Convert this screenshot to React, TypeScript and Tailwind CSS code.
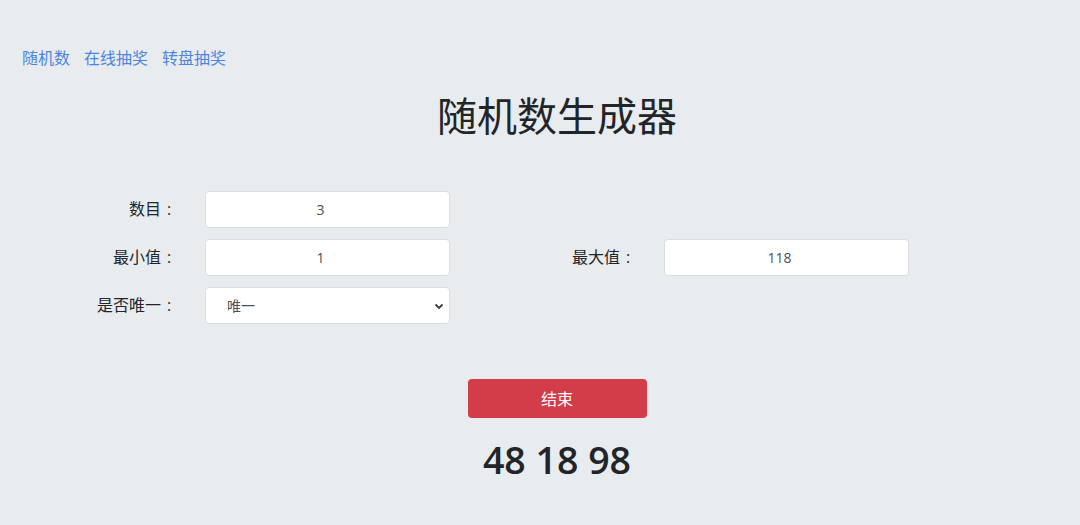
import React from "react";

const font = '"Open Sans", "Noto Sans CJK SC", sans-serif';

function Label({ text }: { text: string }) {
  return (
    <div className="w-[146px] shrink-0 text-right text-[16px] leading-[37px] text-[#212529]">
      {text}
      <span className="inline-block w-[16px] text-center">:</span>
    </div>
  );
}

function Field({ value }: { value: string }) {
  return (
    <input
      readOnly
      value={value}
      className="ml-[28px] h-[37px] w-[245px] rounded-[4px] border border-[#dadde1] bg-white pr-[14px] text-center text-[14px] text-[#495057] outline-none"
      style={{ fontFamily: font }}
    />
  );
}

export default function App() {
  return (
    <div
      className="min-h-[525px] w-full bg-[#e9ecef] text-[#212529]"
      style={{ fontFamily: font }}
    >
      <div className="pt-[46px] pl-[22px] flex gap-[14px] text-[16px] leading-[24px] text-[#4a86e0]">
        <a>随机数</a>
        <a>在线抽奖</a>
        <a>转盘抽奖</a>
      </div>
      <h1 className="mt-[22px] pl-[34px] text-center text-[40px] leading-[48px] font-normal text-[#212529]">
        随机数生成器
      </h1>
      <div className="mt-[51px] pl-[31px] flex flex-col gap-[11px]">
        <div className="flex">
          <div className="flex w-[459px]">
            <Label text="数目" />
            <Field value="3" />
          </div>
        </div>
        <div className="flex">
          <div className="flex w-[459px]">
            <Label text="最小值" />
            <Field value="1" />
          </div>
          <div className="flex w-[459px]">
            <Label text="最大值" />
            <Field value="118" />
          </div>
        </div>
        <div className="flex">
          <div className="flex w-[459px]">
            <Label text="是否唯一" />
            <div className="relative ml-[28px] h-[37px] w-[245px] rounded-[4px] border border-[#dadde1] bg-white">
              <div className="pl-[21px] text-[14px] leading-[35px] text-[#495057]">唯一</div>
              <svg
                className="absolute right-[5px] top-[14px]"
                width="10"
                height="8"
                viewBox="0 0 10 8"
              >
                <path d="M1.5 2.5 L5 6 L8.5 2.5" fill="none" stroke="#343a40" strokeWidth="1.8" />
              </svg>
            </div>
          </div>
        </div>
      </div>
      <div className="mt-[55px] pl-[34px] flex justify-center">
        <button className="h-[39px] w-[179px] rounded-[4px] bg-[#d33c49] text-[16px] text-white">
          结束
        </button>
      </div>
      <div className="mt-[18px] pl-[34px] text-center text-[37.5px] leading-[48px] font-semibold text-[#212529]">
        48 18 98
      </div>
    </div>
  );
}
